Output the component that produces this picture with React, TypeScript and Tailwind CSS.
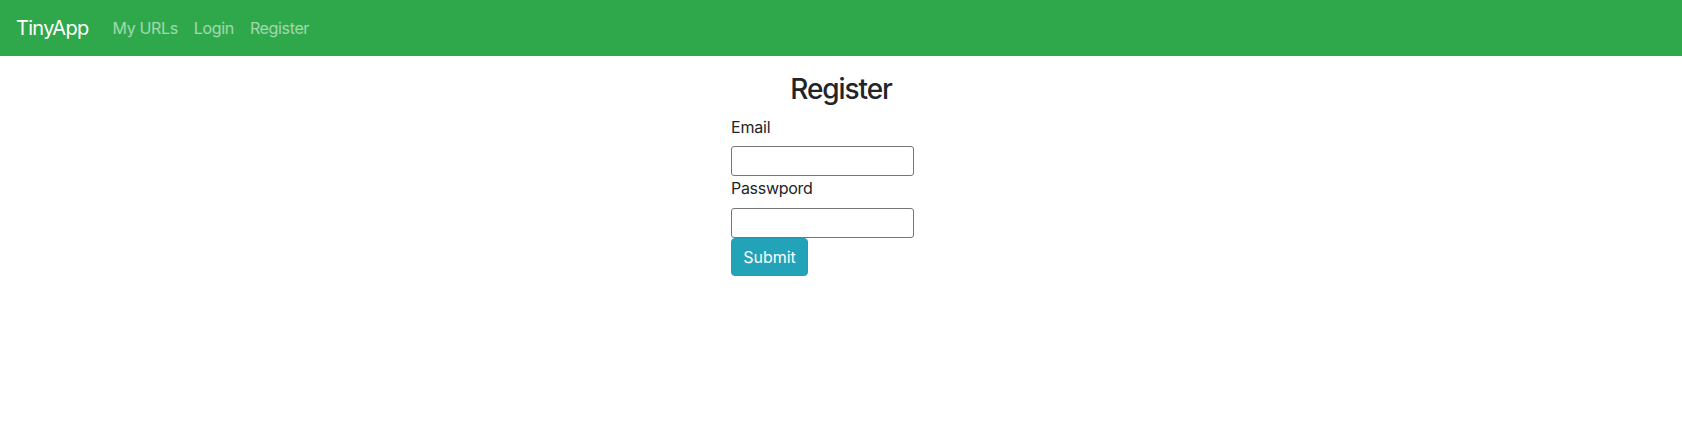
const FONT = "font-['Inter','Liberation_Sans',sans-serif]";

function Navbar() {
  return (
    <nav className="flex h-14 items-center bg-[#2ea84a] px-4">
      <span className="mr-6 text-[20px] leading-[30px] tracking-[-0.7px] text-white">TinyApp</span>
      <div className="flex items-center gap-[16px] text-base tracking-[-0.35px] text-white/55">
        <span>My URLs</span>
        <span>Login</span>
        <span>Register</span>
      </div>
    </nav>
  );
}

export default function App() {
  return (
    <div className={`min-h-[444px] bg-white text-[#212529] ${FONT}`}>
      <Navbar />
      <main className="pt-[17px]">
        <h3 className="mb-2 text-center text-[28px] font-medium leading-[1.2] tracking-[-1.1px]">
          Register
        </h3>
        <form className="ml-[731px] flex w-[183px] flex-col" onSubmit={(e) => e.preventDefault()}>
          <label className="mb-[7px] block text-base leading-6 tracking-[-0.2px]">Email</label>
          <input
            type="email"
            className="h-[30px] w-[183px] rounded-[3px] border border-[#767676] px-[2px]"
          />
          <label className="mb-2 block text-base leading-6 tracking-[-0.3px]">Passwpord</label>
          <input
            type="password"
            className="h-[30px] w-[183px] rounded-[3px] border border-[#767676] px-[2px]"
          />
          <button
            type="submit"
            className="h-[38px] w-[77px] rounded-[4px] border border-[#20a0b4] bg-[#23a3b8] text-base text-white"
          >
            Submit
          </button>
        </form>
      </main>
    </div>
  );
}
